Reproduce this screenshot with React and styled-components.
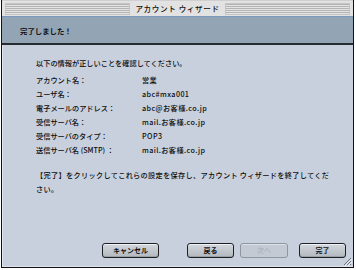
import styled, { createGlobalStyle } from "styled-components";

const GlobalStyle = createGlobalStyle`
  body {
    margin: 0;
    background: #ffffff;
    font-family: "Noto Sans CJK JP", "Noto Sans", sans-serif;
    color: #111;
  }
`;

const accountRows = [
  { label: "アカウント名：", value: "営業" },
  { label: "ユーザ名：", value: "abc#mxa001" },
  { label: "電子メールのアドレス：", value: "abc@お客様.co.jp" },
  { label: "受信サーバ名：", value: "mail.お客様.co.jp" },
  { label: "受信サーバのタイプ：", value: "POP3" },
  { label: "送信サーバ名 (SMTP) ：", value: "mail.お客様.co.jp" },
];

export default function App() {
  return (
    <>
      <GlobalStyle />
      <Window>
        <TitleBar>
          <Stripes />
          <WindowTitle>アカウント ウィザード</WindowTitle>
          <Stripes />
        </TitleBar>
        <Header>完了しました！</Header>
        <Content>
          <Intro>以下の情報が正しいことを確認してください。</Intro>
          <InfoList>
            {accountRows.map((row) => (
              <InfoRow key={row.label}>
                <Label>{row.label}</Label>
                <Value>{row.value}</Value>
              </InfoRow>
            ))}
          </InfoList>
          <Note>
            【完了】をクリックしてこれらの設定を保存し、アカウント ウィザードを終了してください。
          </Note>
          <Footer>
            <Button $ml={0} $w={57}>キャンセル</Button>
            <Button $ml={28} $w={47}>戻る</Button>
            <Button $ml={6} $w={48} disabled>
              次へ
            </Button>
            <Button $ml={11} $w={47}>完了</Button>
          </Footer>
        </Content>
        <Grip width="9" height="9" viewBox="0 0 9 9">
          <path d="M8 1 L1 8 M8 4 L4 8 M8 7 L7 8" stroke="#6d737b" strokeWidth="1" />
          <path d="M9 2 L2 9 M9 5 L5 9" stroke="#f0f2f5" strokeWidth="1" />
        </Grip>
      </Window>
    </>
  );
}

const Window = styled.div`
  position: relative;
  width: 353px;
  height: 268px;
  margin-left: 1px;
  box-sizing: border-box;
  border: 1px solid #111;
  border-top: none;
  display: flex;
  flex-direction: column;
  background: #c8d0dd;
`;

const TitleBar = styled.div`
  height: 16px;
  box-sizing: border-box;
  padding: 3px 3px 2px;
  display: flex;
  align-items: center;
  background: #e2e2e2;
  border-top: 1px solid #cfcfcf;
`;

const Stripes = styled.div`
  flex: 1;
  height: 10px;
  border: 1px solid #c4c4c4;
  background: repeating-linear-gradient(
    to bottom,
    #b4b4b4 0,
    #b4b4b4 1px,
    #e4e4e4 1px,
    #e4e4e4 2px
  );
`;

const WindowTitle = styled.div`
  padding: 0 5px;
  font-size: 7.6px;
  font-weight: 500;
  line-height: 10px;
  letter-spacing: 0.6px;
  color: #111;
`;

const Header = styled.div`
  height: 29px;
  box-sizing: border-box;
  padding-left: 18px;
  display: flex;
  align-items: center;
  background: #93a4b5;
  border-top: 1px solid #7a98c2;
  border-bottom: 2px solid #262b31;
  font-size: 7.4px;
  font-weight: bold;
  color: #111;
`;

const Content = styled.div`
  flex: 1;
  display: flex;
  flex-direction: column;
  padding: 11px 7px 8px 33px;
  border-left: 1px solid #dfe5ee;
  border-bottom: 1px solid #dfe5ee;
  font-size: 7.2px;
  font-weight: 500;
  line-height: 14px;
  color: #0c0c0c;
`;

const Intro = styled.p`
  margin: 0;
`;

const InfoList = styled.div`
  margin-top: 3px;
  display: flex;
  flex-direction: column;
`;

const InfoRow = styled.div`
  display: grid;
  grid-template-columns: 106px 1fr;
  height: 14px;
`;

const Label = styled.span``;

const Value = styled.span`
  letter-spacing: 0.4px;
`;

const Note = styled.p`
  margin: 11px 0 0;
  width: 298px;
  letter-spacing: 0.3px;
`;

const Footer = styled.div`
  margin-top: auto;
  display: flex;
  justify-content: flex-end;
`;

const Button = styled.button`
  width: ${(p) => p.$w}px;
  height: 15px;
  margin-left: ${(p) => p.$ml}px;
  padding: 0;
  box-sizing: border-box;
  border: 1px solid #1d2126;
  border-radius: 3px;
  background: linear-gradient(to bottom, #d3d7dd, #b3b8bf);
  box-shadow: inset 0 1px 0 #eef1f5, inset 0 -1px 0 #9aa0a8;
  font-family: inherit;
  font-size: 7px;
  font-weight: bold;
  line-height: 13px;
  color: #111;

  &:disabled {
    border-color: #8e96a0;
    background: #c4cad3;
    box-shadow: inset 0 1px 0 #dce1e8;
    color: #a3aab4;
    font-weight: normal;
  }
`;

const Grip = styled.svg`
  position: absolute;
  right: 1px;
  bottom: 1px;
`;
